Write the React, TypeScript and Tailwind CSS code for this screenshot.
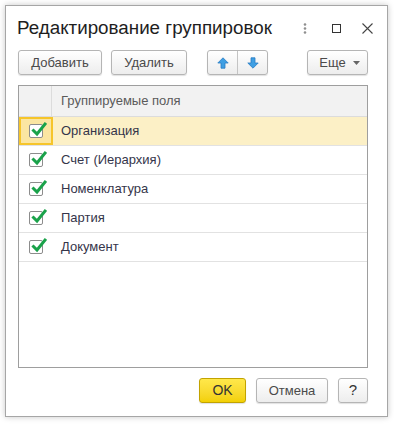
import { useState } from "react";

const fields = ["Организация", "Счет (Иерархия)", "Номенклатура", "Партия", "Документ"];

function Check() {
  return (
    <span className="relative block w-[14px] h-[14px] border border-[#8c8c8c] bg-white rounded-[2px]">
      <svg className="absolute left-[1px] top-[-4px]" width="16" height="16" viewBox="0 0 16 16">
        <path d="M2.5 9.5 L6 13 L14 3" fill="none" stroke="#1aa24a" strokeWidth="3" strokeLinecap="square" />
      </svg>
    </span>
  );
}

function Btn({ children, className = "" }: { children: React.ReactNode; className?: string }) {
  return (
    <button className={"h-[25px] flex items-center justify-center rounded-[3px] border border-[#b5b5b5] bg-gradient-to-b from-white to-[#ededed] shadow-[0_1px_1px_rgba(0,0,0,0.12)] text-[13px] text-[#4a4a4a] " + className}>
      {children}
    </button>
  );
}

function Arrow({ down }: { down?: boolean }) {
  return (
    <svg width="12" height="12" viewBox="0 0 12 12" className={down ? "rotate-180" : ""}>
      <path d="M6 0.8 L11.2 6 L8 6 L8 11.2 L4 11.2 L4 6 L0.8 6 Z" fill="#3f9fe3" stroke="#2a7cc4" strokeWidth="0.8" />
    </svg>
  );
}

export default function App() {
  const [sel] = useState(0);
  return (
    <div className="w-[394px] h-[424px] bg-white pt-[5px] pl-[5px]" style={{ fontFamily: '"Liberation Sans", Arial, sans-serif' }}>
      <div className="w-[383px] h-[412px] border border-[#a6a6a6] bg-white shadow-[0_0_6px_rgba(0,0,0,0.22)] flex flex-col pl-[12px] pr-[19px]">
        <div className="h-[44px] flex items-center">
          <h1 className="text-[18.8px] text-[#1e1e1e] ml-[-1px] mt-[1px]">Редактирование группировок</h1>
          <div className="ml-auto flex items-center">
            <svg width="4" height="11" viewBox="0 0 4 11" className="mr-[25px]">
              <circle cx="2" cy="1.5" r="1.3" fill="#8f8f8f" />
              <circle cx="2" cy="5.5" r="1.3" fill="#8f8f8f" />
              <circle cx="2" cy="9.5" r="1.3" fill="#8f8f8f" />
            </svg>
            <span className="block w-[9px] h-[9px] border border-[#333] mr-[21px]"></span>
            <svg width="11" height="11" viewBox="0 0 11 11" className="mr-[-5px]">
              <path d="M0.5 0.5 L10.5 10.5 M10.5 0.5 L0.5 10.5" stroke="#444" strokeWidth="1.1" />
            </svg>
          </div>
        </div>
        <div className="h-[25px] flex items-center">
          <Btn className="w-[84px]">Добавить</Btn>
          <Btn className="w-[76px] ml-[9px]">Удалить</Btn>
          <div className="ml-[20px] flex h-[25px] w-[61px] rounded-[3px] border border-[#b5b5b5] bg-gradient-to-b from-white to-[#ededed] shadow-[0_1px_1px_rgba(0,0,0,0.12)]">
            <span className="flex-1 flex items-center justify-center border-r border-[#c4c4c4]">
              <Arrow />
            </span>
            <span className="flex-1 flex items-center justify-center">
              <Arrow down />
            </span>
          </div>
          <Btn className="w-[61px] ml-auto gap-[7px] pl-[4px]">
            Еще
            <svg width="7" height="4" viewBox="0 0 7 4">
              <path d="M0 0 L7 0 L3.5 4 Z" fill="#666" />
            </svg>
          </Btn>
        </div>
        <div className="mt-[10px] h-[283px] border border-[#9e9e9e] flex flex-col">
          <div className="h-[31px] flex bg-[#f2f2f2] border-b border-[#dcdcdc]">
            <div className="w-[33px] border-r border-[#dcdcdc]"></div>
            <div className="pl-[9px] flex items-center text-[13px] text-[#5a5a5a]">Группируемые поля</div>
          </div>
          {fields.map((f, i) => (
            <div key={f} className={"h-[29px] flex border-b border-[#e2e2e2] " + (i === sel ? "bg-[#fcf0c6]" : "")}>
              <div className={"w-[34px] flex items-center justify-center " + (i === sel ? "bg-[#fbe6a2] border-2 border-[#f6c52a]" : "")}>
                <Check />
              </div>
              <div className="pl-[8px] flex items-center text-[13px] text-[#35354a]">{f}</div>
            </div>
          ))}
        </div>
        <div className="mt-[10px] h-[25px] flex justify-end gap-[10px]">
          <button className="w-[47px] h-[25px] rounded-[3px] border border-[#c2a300] bg-gradient-to-b from-[#ffe84a] to-[#f3d000] text-[14px] text-[#333] shadow-[0_1px_1px_rgba(0,0,0,0.12)]">OK</button>
          <Btn className="w-[72px]">Отмена</Btn>
          <Btn className="w-[30px] text-[15px] text-[#333]">?</Btn>
        </div>
      </div>
    </div>
  );
}
